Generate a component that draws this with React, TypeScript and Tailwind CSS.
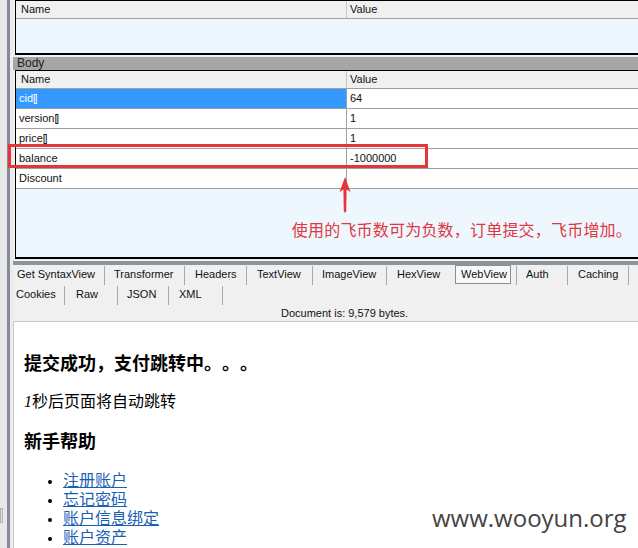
const ui = { fontFamily: '"Liberation Sans", Arial, sans-serif' };
const cjk = { fontFamily: '"Noto Sans CJK SC", "Liberation Sans", sans-serif' };

const bodyRows = [
  { name: "cid", bracket: true, value: "64", selected: true },
  { name: "version", bracket: true, value: "1" },
  { name: "price", bracket: true, value: "1" },
  { name: "balance", bracket: false, value: "-1000000" },
  { name: "Discount", bracket: false, value: "" },
];

const tabsTop = [
  { label: "Get SyntaxView", w: "w-[92px]", pl: "pl-[4px]" },
  { label: "Transformer", w: "w-[80px]", pl: "pl-[9px]" },
  { label: "Headers", w: "w-[62px]", pl: "pl-[10px]" },
  { label: "TextView", w: "w-[66px]", pl: "pl-[10px]" },
  { label: "ImageView", w: "w-[74px]", pl: "pl-[9px]" },
];

const tabsBottom = [
  { label: "Cookies", w: "w-[52px]", pl: "pl-[3px]" },
  { label: "Raw", w: "w-[53px]", pl: "pl-[11px]" },
  { label: "JSON", w: "w-[51px]", pl: "pl-[9px]" },
  { label: "XML", w: "w-[54px]", pl: "pl-[10px]" },
];

const links = ["注册账户", "忘记密码", "账户信息绑定", "账户资产"];

function HeaderRow() {
  return (
    <div className="flex h-[18px] bg-[#f0f0f0] border-b border-[#a0a0a0] text-[11px] text-[#111] leading-[17px]">
      <div className="w-[331px] pl-[5px] border-r border-[#c8c8c8]">Name</div>
      <div className="pl-[3px]">Value</div>
    </div>
  );
}

function UpArrow() {
  return (
    <svg width="14" height="36" viewBox="0 0 14 36" className="absolute left-[325px] top-[177px]">
      <polygon points="7,0 12.5,15 8.6,12.5 8.2,34 7,36 5.8,34 5.4,12.5 1.5,15" fill="#e5343a" />
    </svg>
  );
}

export default function App() {
  return (
    <div className="relative w-[638px] h-[548px] overflow-hidden flex bg-[#f0f0f0]" style={ui}>
      {/* left splitter */}
      <div className="w-[7px] bg-[#e8e8e8] flex flex-col">
        <div className="mt-[508px] h-[15px] w-[3px] bg-[#dcdcdc] border border-[#b4b4b4]" />
      </div>
      <div className="w-[3px] bg-[#848d96]" />
      <div className="w-[3px] bg-[#ececec]" />

      <div className="relative flex-1 flex flex-col">
        {/* query string grid */}
        <div className="ml-[2px] border-l border-t border-black border-b-2 bg-[#eef6fe]">
          <HeaderRow />
          <div className="h-[34px]" />
        </div>

        {/* body grid */}
        <div className="mt-[2px] h-[13px] bg-[#a6a6a6] pl-[4px] text-[12px] leading-[13px] text-[#222]">Body</div>
        <div className="ml-[2px] border-l border-t border-black border-b-2 bg-[#eef6fe]">
          <HeaderRow />
          {bodyRows.map((r) => (
            <div key={r.name} className="flex h-[20px] border-b border-[#a0a0a0] bg-white text-[11px] leading-[19px] text-[#111]">
              <div className={`w-[331px] pl-[3px] border-r border-[#a0a0a0] ${r.selected ? "bg-[#3399ff] text-white" : ""}`}>
                {r.name}
                {r.bracket && <span className="tracking-[-1.5px]">[]</span>}
              </div>
              <div className="pl-[3px]">{r.value}</div>
            </div>
          ))}
          <div className="h-[68px] flex justify-end pr-[6px] pt-[30px]">
            <span className="text-[16px] leading-[20px] text-[#e0383e] tracking-[0.2px] [text-spacing-trim:space-all]" style={cjk}>
              使用的飞币数可为负数，订单提交，飞币增加。
            </span>
          </div>
        </div>

        {/* splitter */}
        <div className="mt-[2px] h-[4px] bg-[#8c949c]" />

        {/* tabs */}
        <div className="flex h-[20px] text-[11px] text-[#111] leading-[16px]">
          {tabsTop.map((t) => (
            <div key={t.label} className={`${t.w} ${t.pl} h-[19px] mt-[1px] border-r border-[#a8a8a8]`}>{t.label}</div>
          ))}
          <div className="w-[68px] pl-[10px] mt-[1px]">HexView</div>
          <div className="w-[56px] h-[19px] border border-[#8e8e8e] bg-[#f8f8f8] pl-[5px] leading-[16px]">WebView</div>
          <div className="w-[6px] h-[19px] mt-[1px] border-r border-[#a8a8a8]" />
          <div className="w-[51px] pl-[9px] h-[19px] mt-[1px] border-r border-[#a8a8a8]">Auth</div>
          <div className="w-[61px] pl-[10px] h-[19px] mt-[1px] border-r border-[#a8a8a8]">Caching</div>
        </div>
        <div className="flex h-[20px] text-[11px] text-[#111] leading-[16px]">
          {tabsBottom.map((t) => (
            <div key={t.label} className={`${t.w} ${t.pl} h-[19px] mt-[1px] border-r border-[#a8a8a8]`}>{t.label}</div>
          ))}
        </div>
        <div className="h-[16px] pl-[268px] text-[11px] leading-[16px] text-[#111]">Document is: 9,579 bytes.</div>

        {/* web view */}
        <div className="flex-1 bg-white border-t border-l border-[#c8c8c8] pl-[10px] pt-[29px] text-black [text-spacing-trim:space-all]" style={cjk}>
          <h1 className="text-[18px] leading-[22px] font-bold">提交成功，支付跳转中。。。</h1>
          <p className="mt-[18px] text-[16px] leading-[19px]">
            <span className="italic" style={{ fontFamily: '"Liberation Serif", serif' }}>1</span>秒后页面将自动跳转
          </p>
          <h2 className="mt-[18px] text-[18px] leading-[22px] font-bold">新手帮助</h2>
          <ul className="mt-[19px] pl-[39px] list-disc text-[16px] leading-[19px] marker:text-[11px]">
            {links.map((l) => (
              <li key={l}>
                <a className="text-[#1a5fb4] underline">{l}</a>
              </li>
            ))}
          </ul>
        </div>

        {/* annotations */}
        <div className="absolute left-[-5px] top-[144px] w-[420px] h-[24px] border-[3px] border-[#e5343a]" />
        <UpArrow />
        <div
          className="absolute left-[419px] top-[503px] text-[24px] leading-[30px] text-[#444]"
          style={{ fontFamily: '"Open Sans", sans-serif' }}
        >
          www.wooyun.org
        </div>
      </div>
    </div>
  );
}
